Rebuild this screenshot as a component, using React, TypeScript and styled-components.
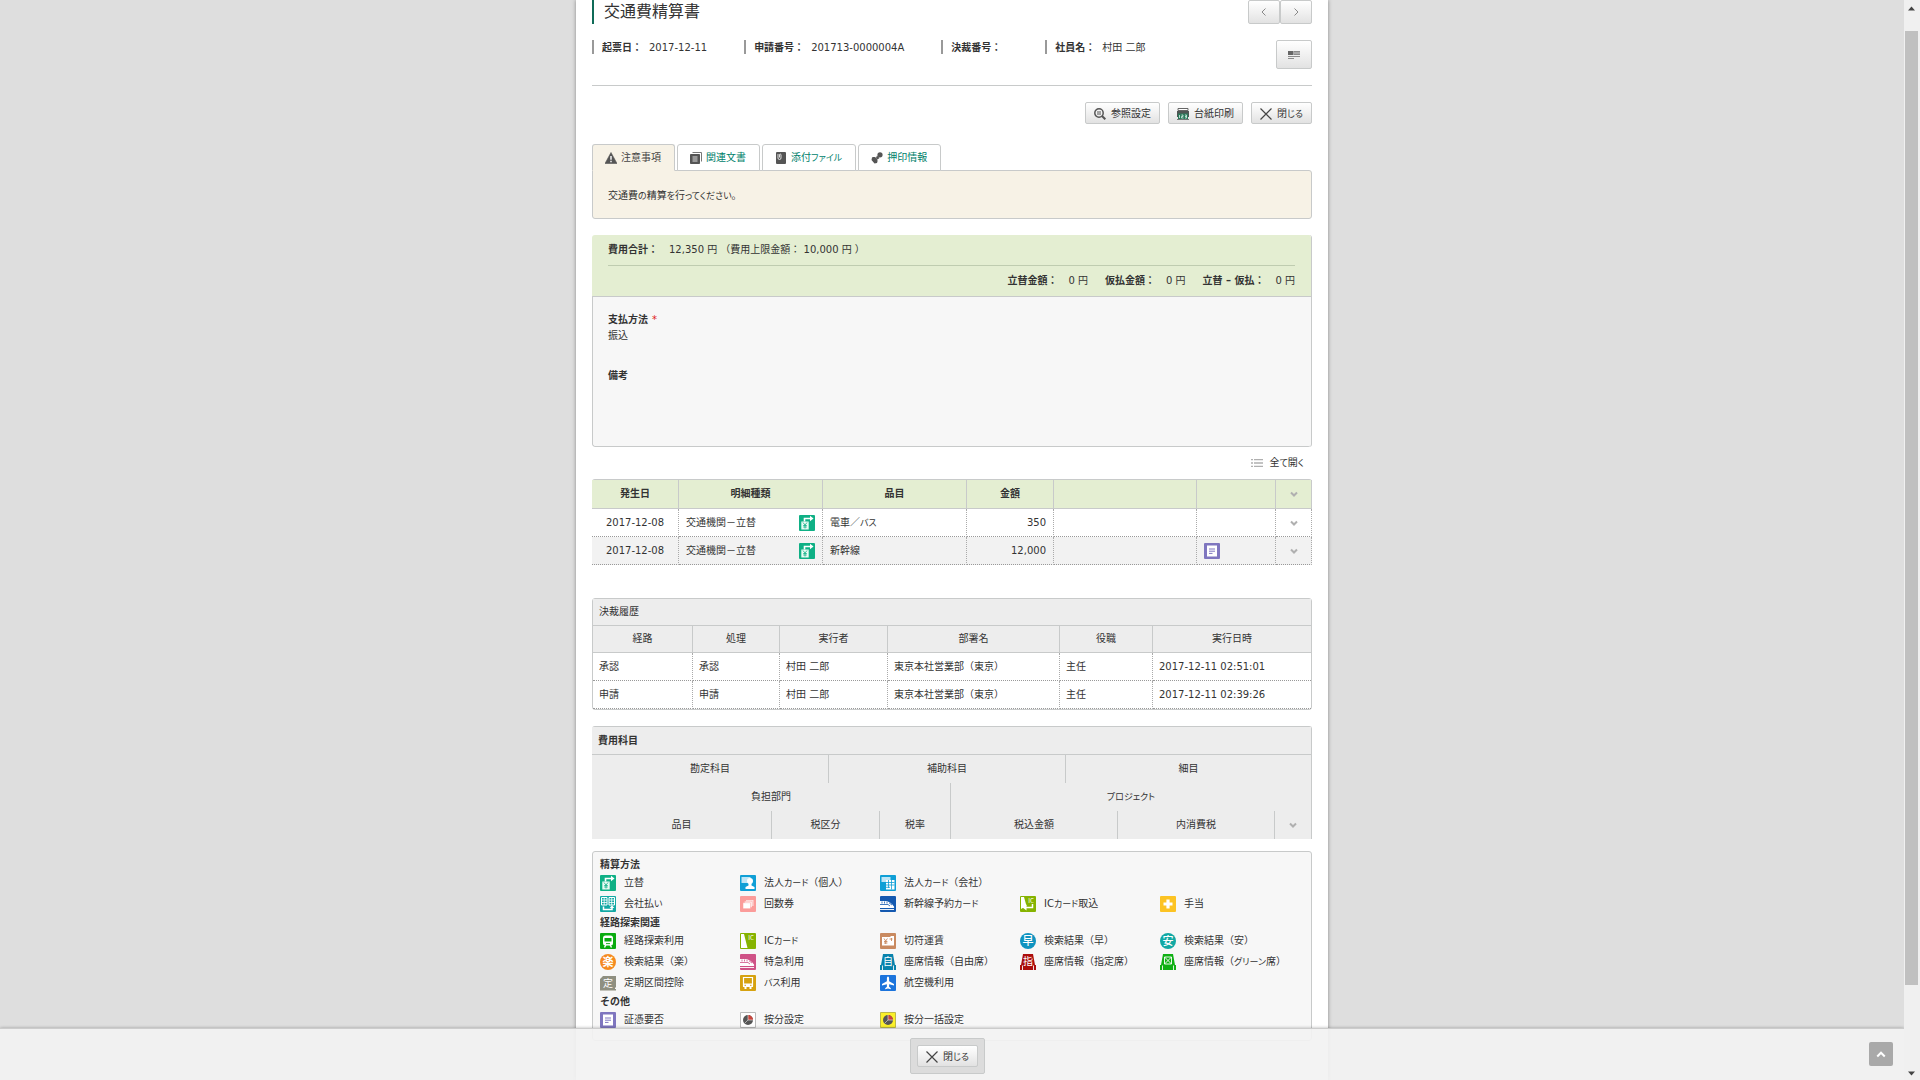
import React from "react";
import styled, { createGlobalStyle, css } from "styled-components";

const GlobalStyle = createGlobalStyle`
  *, *::before, *::after { box-sizing: border-box; }
  html, body, #root { height: 100%; }
  body {
    margin: 0;
    overflow: hidden;
    background: #dedede;
    color: #333;
    font-family: "DejaVu Sans", "Noto Sans CJK JP", sans-serif;
    font-size: 10px;
    line-height: 16px;
  }
  h1, h2, h3, dl, dd, p, ul { margin: 0; padding: 0; }
  a { color: inherit; text-decoration: none; }
  button { font: inherit; color: inherit; cursor: pointer; }
  svg { display: block; flex: none; }
`;

const line = "#c8caca";

/* ---------- frame ---------- */

const Screen = styled.div`
  display: flex;
  height: 100vh;
`;

const Viewport = styled.div`
  flex: 1;
  height: 100%;
  overflow: hidden;
  display: flex;
  justify-content: center;
`;

const Sheet = styled.main`
  width: 100%;
  max-width: 752px;
  min-height: 100%;
  padding: 0 16px;
  background: #fff;
  box-shadow: 0 0 4px rgba(0, 0, 0, 0.4);
`;

const Scrollbar = styled.div`
  width: 16px;
  padding: 6px 2px 4px 1px;
  background: #f0f0f0;
  display: flex;
  flex-direction: column;
  align-items: center;
  position: relative;
  z-index: 3;
`;

const Thumb = styled.div`
  width: 100%;
  flex: 953;
  margin-top: 20px;
  background: #c0c0c0;
`;

const Track = styled.div`
  flex: 86;
`;

/* ---------- shared ---------- */

const Kana = styled.span`
  font-size: 9px;
  font-feature-settings: "palt";
`;

const kanaRun = /([ぁ-んァ-ヶー]+)/;

function Jp({ children }: { children: string }) {
  return (
    <span>
      {children.split(kanaRun).map((part, i) => (i % 2 ? <Kana key={i}>{part}</Kana> : part))}
    </span>
  );
}

const raised = css`
  border: 1px solid ${line};
  border-radius: 2px;
  background: linear-gradient(#fff, #ebebeb 70%, #e2e2e2);
`;

const ActionButton = styled.button`
  ${raised}
  display: inline-flex;
  align-items: center;
  gap: 5px;
  height: 22px;
  padding: 1px 8px 0;
  white-space: nowrap;
`;

/* ---------- header ---------- */

const TitleBar = styled.header`
  display: flex;
  justify-content: space-between;
  height: 24px;
`;

const Title = styled.h1`
  padding-left: 10px;
  border-left: 2px solid #0f6b58;
  font-size: 16px;
  font-weight: 400;
  line-height: 24px;
`;

const Pager = styled.div`
  display: flex;
`;

const PagerButton = styled.button`
  ${raised}
  width: 32px;
  height: 24px;
  padding: 0;
  display: grid;
  place-items: center;
`;

const MetaBar = styled.div`
  display: flex;
  justify-content: space-between;
  margin-top: 16px;
  padding-bottom: 16px;
  border-bottom: 1px solid ${line};
`;

const MetaList = styled.dl`
  display: flex;
`;

const MetaItem = styled.div`
  display: flex;
  gap: 7px;
  height: 14px;
  padding: 0 37px 0 8px;
  border-left: 2px solid #999;
  line-height: 16px;
  dt { font-weight: 700; }
`;

const MenuButton = styled.button`
  ${raised}
  width: 36px;
  height: 29px;
  padding: 0;
  display: grid;
  place-items: center;
`;

const Actions = styled.div`
  display: flex;
  justify-content: flex-end;
  gap: 8px;
  margin: 16px 0 20px;
`;

/* ---------- tabs ---------- */

const Tabs = styled.nav`
  display: flex;
  gap: 2px;
  position: relative;
`;

const Tab = styled.a<{ $active?: boolean }>`
  display: flex;
  align-items: center;
  gap: 4px;
  height: 27px;
  margin-bottom: -1px;
  padding: 0 13px 0 12px;
  border: 1px solid ${line};
  border-bottom-color: ${(p) => (p.$active ? "#f7f2e6" : line)};
  border-radius: 3px 3px 0 0;
  background: ${(p) => (p.$active ? "#f7f2e6" : "#fff")};
  color: ${(p) => (p.$active ? "#444" : "#00816b")};
`;

const Notice = styled.section`
  padding: 17px 15px 14px;
  border: 1px solid ${line};
  border-radius: 0 3px 3px 3px;
  background: #f7f2e6;
`;

/* ---------- summary ---------- */

const Card = styled.section`
  margin-top: 16px;
  border-right: 1px solid ${line};
  border-radius: 3px;
  overflow: hidden;
`;

const Summary = styled.div`
  padding: 0 16px;
  background: #e4eed2;
  border-bottom: 1px solid ${line};
`;

const SummaryRow = styled.dl<{ $right?: boolean }>`
  display: flex;
  gap: 17px;
  justify-content: ${(p) => (p.$right ? "flex-end" : "flex-start")};
  line-height: 30px;
  & + & { border-top: 1px solid #bfccb0; }
`;

const Amount = styled.div`
  display: flex;
  gap: 11px;
  white-space: pre;
  dt { font-weight: 700; }
`;

const Details = styled.dl`
  padding: 15px 15px 16px;
  border: 1px solid ${line};
  border-width: 0 0 1px 1px;
  border-radius: 0 0 3px 3px;
  background: #f7f7f7;
  dt { font-weight: 700; }
  dd { min-height: 46px; }
  dd:first-of-type { min-height: 40px; }
`;

const Required = styled.span`
  margin-left: 4px;
  color: #e02020;
  font-weight: 400;
`;

/* ---------- tables ---------- */

const OpenAll = styled.div`
  display: flex;
  justify-content: flex-end;
  padding-right: 8px;
  a {
    display: flex;
    align-items: center;
    gap: 7px;
    height: 32px;
  }
`;

const Table = styled.table`
  width: 100%;
  table-layout: fixed;
  border-collapse: separate;
  border-spacing: 0;
  th, td {
    height: 28px;
    padding: 0 7px;
    white-space: nowrap;
  }
  th { border-right: 1px solid ${line}; font-weight: 400; }
  td { border-right: 1px dotted #aaa; border-bottom: 1px dotted #999; }
`;

const ItemTable = styled(Table)`
  border-top: 1px solid ${line};
  border-radius: 3px 3px 0 0;
  margin-bottom: 33px;
  th {
    height: 29px;
    background: #e4eed2;
    border-bottom: 1px solid ${line};
    font-weight: 700;
  }
  tbody tr:nth-child(even) td { background: #f2f2f2; }
`;

const Cell = styled.td<{ $align?: "center" | "right" }>`
  text-align: ${(p) => p.$align ?? "left"};
`;

const Spread = styled.div`
  display: flex;
  align-items: center;
  justify-content: space-between;
`;

const ToggleButton = styled.button`
  display: grid;
  place-items: center;
  width: 100%;
  height: 16px;
  padding: 0;
  border: 0;
  background: none;
`;

const Block = styled.section<{ $open?: boolean }>`
  margin-bottom: ${(p) => (p.$open ? "12px" : "16px")};
  border: 1px solid ${line};
  border-width: ${(p) => (p.$open ? "1px 1px 0 0" : "1px")};
  border-radius: ${(p) => (p.$open ? "3px 3px 0 0" : "3px")};
  th { background: #ededed; }
  th:last-child, td:last-child { border-right: 0; }
`;

const BlockTitle = styled.h2<{ $bold?: boolean }>`
  padding: 0 6px;
  background: #ededed;
  border-bottom: 1px solid ${line};
  font-size: 10px;
  font-weight: ${(p) => (p.$bold ? 700 : 400)};
  line-height: ${(p) => (p.$bold ? "27px" : "26px")};
`;

const HistoryTable = styled(Table)`
  th { height: 27px; border-bottom: 1px solid ${line}; }
  td { padding: 0 6px; }
`;

/* ---------- legend ---------- */

const Legend = styled.section`
  padding: 7px;
  border: 1px solid ${line};
  border-radius: 3px;
  background: #f7f7f7;
`;

const LegendHeading = styled.h3`
  font-size: 10px;
  line-height: 12px;
  padding-bottom: 4px;
`;

const LegendGrid = styled.ul`
  display: grid;
  grid-template-columns: repeat(5, 140px);
  grid-auto-rows: 21px;
  list-style: none;
`;

const LegendItem = styled.li<{ $start?: boolean }>`
  display: flex;
  gap: 8px;
  white-space: nowrap;
  ${(p) => p.$start && "grid-column-start: 1;"}
`;

/* ---------- footer ---------- */

const Footer = styled.footer`
  position: fixed;
  left: 0;
  right: 16px;
  bottom: 0;
  height: 52px;
  z-index: 2;
  display: flex;
  align-items: center;
  justify-content: center;
  padding: 3px 9px 0 0;
  border-top: 1px solid #ccc;
  background: rgba(242, 242, 242, 0.93);
  box-shadow: 0 0 3px rgba(0, 0, 0, 0.3);
`;

const FooterBox = styled.div`
  display: flex;
  padding: 6px;
  border: 1px solid ${line};
  border-radius: 2px;
  background: #dcdcdc;
`;

const TopButton = styled.button`
  position: absolute;
  right: 11px;
  top: 13px;
  width: 24px;
  height: 24px;
  padding: 0;
  display: grid;
  place-items: center;
  border: 0;
  border-radius: 2px;
  background: #a9a9a9;
`;

/* ---------- drawings ---------- */

const Chevron = ({ dir, size = 8, color = "#b0b0b0", w = 2 }: { dir: "up" | "down" | "left" | "right"; size?: number; color?: string; w?: number }) => {
  const d = { up: "M1 6l3-3 3 3", down: "M1 2.5l3 3 3-3", left: "M5.5 0.5L2 4l3.5 3.5", right: "M2.5 0.5L6 4 2.5 7.5" }[dir];
  return (
    <svg width={size} height={size} viewBox="0 0 8 8" fill="none" stroke={color} strokeWidth={w}>
      <path d={d} />
    </svg>
  );
};

const Arrow = ({ up }: { up?: boolean }) => (
  <svg width="7" height="5" viewBox="0 0 7 5" fill="#444">
    <path d={up ? "M0 4.5h7L3.5 0.5z" : "M0 0.5h7L3.5 4.5z"} />
  </svg>
);

const Cross = () => (
  <svg width="12" height="12" viewBox="0 0 12 12" fill="none" stroke="#444" strokeWidth="1.2">
    <path d="M0.5 0.5l11 11M11.5 0.5l-11 11" />
  </svg>
);

const Magnifier = () => (
  <svg width="12" height="12" viewBox="0 0 12 12" fill="none" stroke="#555">
    <circle cx="5" cy="5" r="4.2" strokeWidth="1.5" />
    <path d="M3 4h4M3 6h4" strokeWidth="1" />
    <path d="M8 8l3.3 3.3" strokeWidth="2" />
  </svg>
);

const Printer = () => (
  <svg width="12" height="12" viewBox="0 0 12 12">
    <path d="M1 0.5h10v2H1z" fill="#fff" stroke="#666" />
    <path d="M0 3h12v6H0z" fill="#4f5553" />
    <path d="M1 5.500h10V11H1z" fill="#2c7a5c" />
    <path d="M2.500 7v3M4.500 7h1.500v1.500H4.500V10H6.500M8 7h1.500v3H8M8 8.500h1.500" stroke="#d8efe4" strokeWidth="0.8" fill="none" />
    <path d="M0 11.500h12" stroke="#777" />
  </svg>
);

const CardGlyph = () => (
  <svg width="12" height="8" viewBox="0 0 12 8">
    <path d="M0 0h12v4H0z" fill="#aaa" />
    <path d="M0 0h5v4H0z" fill="#666" />
    <path d="M6 0.500h6M6 3.500h6M0 5.500h12M0 7.500h6" stroke="#8a8a8a" strokeWidth="1" />
  </svg>
);

const Warning = () => (
  <svg width="12" height="12" viewBox="0 0 12 12">
    <path d="M6 0.500L12 11.500H0z" fill="#555" stroke="#555" strokeLinejoin="round" strokeWidth="0.6" />
    <path d="M6 4v3.800M6 8.800v1.400" stroke="#fff" strokeWidth="1.400" />
  </svg>
);

const Copies = () => (
  <svg width="12" height="12" viewBox="0 0 12 12">
    <path d="M2.500 0.500h9v9" fill="none" stroke="#777" />
    <path d="M0.500 2.500h9v9h-9z" fill="#555" stroke="#555" />
    <path d="M2.500 5h5M2.500 7h5M2.500 9h5" stroke="#eee" strokeWidth="0.9" />
  </svg>
);

const Attachment = () => (
  <svg width="12" height="12" viewBox="0 0 12 12">
    <rect x="1" width="10" height="12" rx="1" fill="#555" />
    <path d="M3 2v4a1.500 1.500 0 0 0 3 0V2.500a1 1 0 0 0-1.500 0V5.500" fill="none" stroke="#fff" strokeWidth="0.800" />
  </svg>
);

const Stamp = () => (
  <svg width="12" height="12" viewBox="0 0 12 12" fill="#555">
    <circle cx="9" cy="2.800" r="2.600" />
    <path d="M6 3.500L8.500 6 6.500 7.500 5 6z" />
    <path d="M1 5.500c2-1 3.500-.3 4.500.8S7 9 6 11L3.500 11.500 0.500 8z" />
  </svg>
);

const ListGlyph = () => (
  <svg width="12" height="8" viewBox="0 0 12 8" stroke="#b0b0b0">
    <path d="M0 0.500h2M3 0.500h9M0 4h2M3 4h9M0 7.500h2M3 7.500h9" strokeWidth="1.400" />
  </svg>
);

const glyphText = { fontFamily: '"Noto Sans CJK JP", sans-serif', textAnchor: "middle" as const, fill: "#fff" };

const Base = ({ color, children, round }: { color: string; children?: React.ReactNode; round?: boolean }) => (
  <svg width="16" height="16" viewBox="0 0 16 16" fill="none">
    {round ? <circle cx="8" cy="8" r="8" fill={color} /> : <rect width="16" height="16" rx="1" fill={color} />}
    {children}
  </svg>
);

const Seat = ({ color, children }: { color: string; children: React.ReactNode }) => (
  <svg width="16" height="16" viewBox="0 0 16 16" fill="none">
    <path d="M3 0h10l2 11h1v5H0v-5h1z" fill={color} />
    <path d="M2.500 11.500V16M13.500 11.500V16" stroke="#f7f7f7" strokeWidth="0.900" />
    {children}
  </svg>
);

const Bullet = ({ train }: { train: string }) => (
  <>
    <path d="M0 5h5c4 0 7 2.500 9 5.500.5 1-.2 1.500-1 1.500H0z" fill="#fff" />
    <path d="M0 8.500h8l2 1.500M9 6.800l3 2.200M2 5.500V7.500M4.500 5.500V7.500M7 6V7.500" stroke={train} strokeWidth="0.800" />
    <path d="M0 13.500h14" stroke="#fff" strokeWidth="0.900" />
  </>
);

const Pie = () => (
  <>
    <circle cx="8" cy="8" r="5" fill="#555" />
    <path d="M8 8V3a5 5 0 0 1 5 5z" fill="#c8453c" />
    <path d="M8 3v5h5M8 8l-3.500 3.500" stroke="#eee" strokeWidth="0.600" />
  </>
);

const icons: Record<string, React.ReactElement> = {
  advance: (
    <Base color="#0fb085">
      <path d="M2.300 6.500h7.400v8H2.300z" fill="#e9fbf4" />
      <path d="M5.500 6.500V3.500H12" stroke="#fff" strokeWidth="1.600" />
      <path d="M11 0.800L14.500 3.500 11 6.200z" fill="#fff" />
      <path d="M4 7.500l2 2.500 2-2.500M6 10v3.500M4.200 10.500h3.600M4.200 12h3.600" stroke="#0fb085" strokeWidth="0.800" />
    </Base>
  ),
  personalCard: (
    <Base color="#0f9fd6">
      <path d="M1.500 2h9v6h-9z" fill="#bfe6f6" />
      <circle cx="10" cy="6" r="3" fill="#fff" />
      <path d="M8.500 8h3v2.500L14.500 12v2h-9v-2l3-1.500z" fill="#fff" />
    </Base>
  ),
  companyCard: (
    <Base color="#0f9fd6">
      <path d="M1.500 2h9v5h-9z" fill="#bfe6f6" />
      <path d="M6 5h8.500v9.500H6z" fill="#fff" />
      <path d="M6 7.500h8.500M6 10h8.500M6 12.300h4M8.500 5v8M11.500 5v9.500" stroke="#0f9fd6" strokeWidth="0.800" />
    </Base>
  ),
  companyPay: (
    <Base color="#12a9a4">
      <path d="M1.500 1.500h5.500V9H1.500zM9 1.500h5.500V9H9z" stroke="#fff" />
      <path d="M1.500 4h5.500M1.500 6.500h5.500M4.200 1.500V9M9 4h5.500M9 6.500h5.500M11.700 1.500V9" stroke="#fff" strokeWidth="0.800" />
      <path d="M3.500 10.500V13.500h8.500V11" stroke="#fff" strokeWidth="1.500" />
      <path d="M9.700 12L12 9.300l2.300 2.700z" fill="#fff" />
    </Base>
  ),
  coupon: (
    <Base color="#fb9c9a">
      <path d="M6 4h7.500v6H6z" fill="#fde0df" />
      <path d="M4.500 5.300H12v6H4.500z" fill="#fff" stroke="#fb9c9a" strokeWidth="0.500" />
      <path d="M3 6.700h7.500v6H3z" fill="#fff" stroke="#fb9c9a" strokeWidth="0.500" />
    </Base>
  ),
  shinkansenCard: (
    <Base color="#1459b0">
      <Bullet train="#1459b0" />
    </Base>
  ),
  icImport: (
    <Base color="#86b300">
      <path d="M1 1h3l2.500 9L1 13z" fill="#fff" />
      <text x="11" y="7" fontSize="6" {...glyphText}>IC</text>
      <path d="M12.500 8v3.500H5" stroke="#fff" strokeWidth="1.500" />
      <path d="M6.500 8.500L2.500 11.500l4 3z" fill="#fff" />
    </Base>
  ),
  allowance: (
    <Base color="#fcc323">
      <path d="M8 3.500v9M3.500 8h9" stroke="#fff" strokeWidth="3.200" />
    </Base>
  ),
  route: (
    <Base color="#0aab0f">
      <rect x="3" y="2.500" width="10" height="10" rx="2.500" fill="#fff" />
      <path d="M4.500 5h7v3.500h-7z" fill="#0aab0f" />
      <path d="M4.500 14.500l1.500-3M11.500 14.500l-1.500-3" stroke="#fff" strokeWidth="1.400" />
      <path d="M6 10.600h4" stroke="#0aab0f" strokeWidth="0.900" />
    </Base>
  ),
  icCard: (
    <Base color="#86b300">
      <path d="M1 1h3l3.500 14H1z" fill="#fff" />
      <text x="11" y="7" fontSize="6" {...glyphText}>IC</text>
    </Base>
  ),
  ticket: (
    <Base color="#c98a60">
      <path d="M2 4h8l1-1h3v9.500H2z" fill="#fff" />
      <path d="M4 5.500l1.700 2.500 1.700-2.500M5.700 8v3M4 8.500h3.400M4 10h3.400M9.500 6h3M11.500 5v3" stroke="#c98a60" strokeWidth="0.900" />
    </Base>
  ),
  fast: (
    <Base color="#0f93c0" round>
      <text x="8" y="12" fontSize="11" fontWeight="500" {...glyphText}>早</text>
    </Base>
  ),
  cheap: (
    <Base color="#12a8a4" round>
      <text x="8" y="12" fontSize="11" fontWeight="500" {...glyphText}>安</text>
    </Base>
  ),
  easy: (
    <Base color="#f58a1f" round>
      <text x="8" y="12" fontSize="11" fontWeight="700" {...glyphText}>楽</text>
    </Base>
  ),
  express: (
    <Base color="#cf5286">
      <Bullet train="#cf5286" />
    </Base>
  ),
  freeSeat: (
    <Seat color="#0a83ac">
      <text x="8" y="11" fontSize="10" {...glyphText}>自</text>
    </Seat>
  ),
  reservedSeat: (
    <Seat color="#ab0d0d">
      <text x="8" y="11" fontSize="10" {...glyphText}>指</text>
    </Seat>
  ),
  greenSeat: (
    <Seat color="#10b014">
      <path d="M4.500 3h7v7h-7zM4.500 3l7 7M11.500 3l-7 7" stroke="#fff" strokeWidth="0.900" />
    </Seat>
  ),
  pass: (
    <svg width="16" height="16" viewBox="0 0 16 16">
      <path d="M3 1h13v11.500h-1V14h1v1.500H0V4z" fill="#8f8f80" />
      <text x="8" y="12" fontSize="10" {...glyphText}>定</text>
    </svg>
  ),
  bus: (
    <Base color="#d6a210">
      <path d="M3.500 2.500h9v8.500h-9z" stroke="#fff" strokeWidth="1.200" />
      <path d="M3 8.500h10V12H3zM4.500 12h2v2h-2zM9.500 12h2v2h-2z" fill="#fff" />
      <path d="M4.500 10.300h1.500M10 10.300h1.500" stroke="#d6a210" />
    </Base>
  ),
  plane: (
    <Base color="#1c74dc">
      <path d="M8 1.500c.8 0 1.100 1 1.100 2v2.700L14 9v1.500L9.100 9.200v2.600l1.700 1.400v1L8 13.500l-2.800.7v-1l1.700-1.400V9.200L2 10.500V9l4.900-2.800V3.500c0-1 .3-2 1.100-2z" fill="#fff" />
    </Base>
  ),
  receipt: (
    <Base color="#7f76bf">
      <path d="M3 3h10v10.500H3z" fill="#fff" />
      <path d="M3.500 2.500h9" stroke="#fff" strokeDasharray="1 1" />
      <path d="M5 6h6M5 8.200h6M5 10.400h3.500" stroke="#7f76bf" strokeWidth="1" />
    </Base>
  ),
  split: (
    <svg width="16" height="16" viewBox="0 0 16 16" fill="none">
      <path d="M0.500 0.500h15v15h-15z" fill="#fff" stroke="#bbb" />
      <Pie />
    </svg>
  ),
  splitAll: (
    <svg width="16" height="16" viewBox="0 0 16 16" fill="none">
      <path d="M0.500 0.500h15v15h-15z" fill="#fbf02a" stroke="#bdb94a" />
      <Pie />
    </svg>
  ),
};

/* ---------- data ---------- */

const meta = [
  ["起票日：", "2017-12-11"],
  ["申請番号：", "201713-0000004A"],
  ["決裁番号：", ""],
  ["社員名：", "村田 二郎"],
];

const items = [
  { date: "2017-12-08", kind: "交通機関－立替", item: "電車／バス", amount: "350", receipt: false },
  { date: "2017-12-08", kind: "交通機関－立替", item: "新幹線", amount: "12,000", receipt: true },
];

const history = [
  ["承認", "承認", "村田 二郎", "東京本社営業部（東京）", "主任", "2017-12-11 02:51:01"],
  ["申請", "申請", "村田 二郎", "東京本社営業部（東京）", "主任", "2017-12-11 02:39:26"],
];

const accountRows: [string, number][][] = [
  [["勘定科目", 2], ["補助科目", 3], ["細目", 3]],
  [["負担部門", 4], ["プロジェクト", 4]],
  [["品目", 1], ["税区分", 2], ["税率", 1], ["税込金額", 2], ["内消費税", 1], ["", 1]],
];

const legend: { title: string; entries: [string, string, boolean?][] }[] = [
  {
    title: "精算方法",
    entries: [
      ["advance", "立替"],
      ["personalCard", "法人カード（個人）"],
      ["companyCard", "法人カード（会社）"],
      ["companyPay", "会社払い", true],
      ["coupon", "回数券"],
      ["shinkansenCard", "新幹線予約カード"],
      ["icImport", "ICカード取込"],
      ["allowance", "手当"],
    ],
  },
  {
    title: "経路探索関連",
    entries: [
      ["route", "経路探索利用"],
      ["icCard", "ICカード"],
      ["ticket", "切符運賃"],
      ["fast", "検索結果（早）"],
      ["cheap", "検索結果（安）"],
      ["easy", "検索結果（楽）", true],
      ["express", "特急利用"],
      ["freeSeat", "座席情報（自由席）"],
      ["reservedSeat", "座席情報（指定席）"],
      ["greenSeat", "座席情報（グリーン席）"],
      ["pass", "定期区間控除", true],
      ["bus", "バス利用"],
      ["plane", "航空機利用"],
    ],
  },
  {
    title: "その他",
    entries: [
      ["receipt", "証憑要否"],
      ["split", "按分設定"],
      ["splitAll", "按分一括設定"],
    ],
  },
];

const Cols = ({ widths }: { widths: (number | undefined)[] }) => (
  <colgroup>
    {widths.map((w, i) => (
      <col key={i} width={w} />
    ))}
  </colgroup>
);

const Toggle = () => (
  <ToggleButton type="button" aria-label="開く">
    <Chevron dir="down" />
  </ToggleButton>
);

export default function App() {
  return (
    <Screen>
      <GlobalStyle />
      <Viewport>
        <Sheet lang="ja">
          <TitleBar>
            <Title>交通費精算書</Title>
            <Pager>
              <PagerButton type="button" aria-label="前へ"><Chevron dir="left" color="#888" w={1} /></PagerButton>
              <PagerButton type="button" aria-label="次へ"><Chevron dir="right" color="#888" w={1} /></PagerButton>
            </Pager>
          </TitleBar>

          <MetaBar>
            <MetaList>
              {meta.map(([label, value]) => (
                <MetaItem key={label}>
                  <dt>{label}</dt>
                  <dd>{value}</dd>
                </MetaItem>
              ))}
            </MetaList>
            <MenuButton type="button" aria-label="メニュー"><CardGlyph /></MenuButton>
          </MetaBar>

          <Actions>
            <ActionButton type="button"><Magnifier />参照設定</ActionButton>
            <ActionButton type="button"><Printer />台紙印刷</ActionButton>
            <ActionButton type="button"><Cross /><Jp>閉じる</Jp></ActionButton>
          </Actions>

          <Tabs>
            <Tab href="#notice" $active><Warning />注意事項</Tab>
            <Tab href="#documents"><Copies />関連文書</Tab>
            <Tab href="#files"><Attachment /><Jp>添付ファイル</Jp></Tab>
            <Tab href="#stamps"><Stamp />押印情報</Tab>
          </Tabs>
          <Notice id="notice"><Jp>交通費の精算を行ってください。</Jp></Notice>

          <Card>
            <Summary>
              <SummaryRow>
                <Amount><dt>費用合計：</dt><dd>{"12,350 円 （費用上限金額： 10,000 円 ）"}</dd></Amount>
              </SummaryRow>
              <SummaryRow $right>
                <Amount><dt>立替金額：</dt><dd>0 円</dd></Amount>
                <Amount><dt>仮払金額：</dt><dd>0 円</dd></Amount>
                <Amount><dt>立替 – 仮払：</dt><dd>0 円</dd></Amount>
              </SummaryRow>
            </Summary>
            <Details>
              <dt>支払方法<Required>*</Required></dt>
              <dd>振込</dd>
              <dt>備考</dt>
              <dd />
            </Details>
          </Card>

          <OpenAll>
            <a href="#items"><ListGlyph /><Jp>全て開く</Jp></a>
          </OpenAll>

          <ItemTable id="items">
            <Cols widths={[87, 144, 144, 87, 143, 79, undefined]} />
            <thead>
              <tr>
                <th>発生日</th>
                <th>明細種類</th>
                <th>品目</th>
                <th>金額</th>
                <th />
                <th />
                <th><Toggle /></th>
              </tr>
            </thead>
            <tbody>
              {items.map((row) => (
                <tr key={row.item}>
                  <Cell $align="center">{row.date}</Cell>
                  <Cell><Spread>{row.kind}{icons.advance}</Spread></Cell>
                  <Cell><Jp>{row.item}</Jp></Cell>
                  <Cell $align="right">{row.amount}</Cell>
                  <Cell />
                  <Cell>{row.receipt && icons.receipt}</Cell>
                  <Cell><Toggle /></Cell>
                </tr>
              ))}
            </tbody>
          </ItemTable>

          <Block>
            <BlockTitle>決裁履歴</BlockTitle>
            <HistoryTable>
              <Cols widths={[100, 87, 108, 172, 93, undefined]} />
              <thead>
                <tr>
                  {["経路", "処理", "実行者", "部署名", "役職", "実行日時"].map((h) => <th key={h}>{h}</th>)}
                </tr>
              </thead>
              <tbody>
                {history.map((row) => (
                  <tr key={row[5]}>
                    {row.map((v, i) => <Cell key={i}>{v}</Cell>)}
                  </tr>
                ))}
              </tbody>
            </HistoryTable>
          </Block>

          <Block $open>
            <BlockTitle $bold>費用科目</BlockTitle>
            <Table>
              <Cols widths={[180, 57, 51, 71, 115, 52, 157, undefined]} />
              <thead>
                {accountRows.map((row, r) => (
                  <tr key={r}>
                    {row.map(([label, span]) => (
                      <th key={label} colSpan={span}>{label ? <Jp>{label}</Jp> : <Toggle />}</th>
                    ))}
                  </tr>
                ))}
              </thead>
            </Table>
          </Block>

          <Legend>
            {legend.map((group) => (
              <React.Fragment key={group.title}>
                <LegendHeading>{group.title}</LegendHeading>
                <LegendGrid>
                  {group.entries.map(([icon, label, start]) => (
                    <LegendItem key={label} $start={start}>
                      {icons[icon]}
                      <Jp>{label}</Jp>
                    </LegendItem>
                  ))}
                </LegendGrid>
              </React.Fragment>
            ))}
          </Legend>
        </Sheet>
      </Viewport>

      <Footer>
        <FooterBox>
          <ActionButton type="button"><Cross /><Jp>閉じる</Jp></ActionButton>
        </FooterBox>
        <TopButton type="button" aria-label="ページの先頭へ"><Chevron dir="up" size={10} color="#fff" w={1.6} /></TopButton>
      </Footer>

      <Scrollbar aria-hidden="true">
        <Arrow up />
        <Thumb />
        <Track />
        <Arrow />
      </Scrollbar>
    </Screen>
  );
}
